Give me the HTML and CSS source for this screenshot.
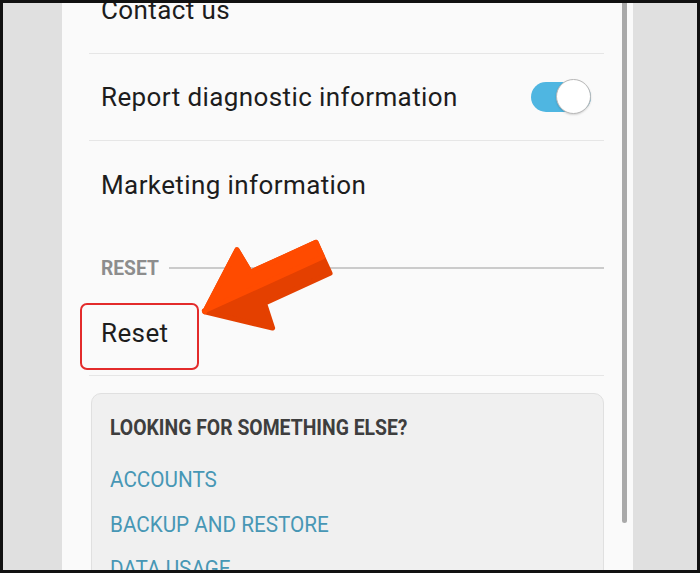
FILE: index.html
```html
<!DOCTYPE html>
<html lang="en">
<head>
  <meta charset="UTF-8">
  <meta name="viewport" content="width=device-width, initial-scale=1.0">
  <title>Settings – Reset</title>
  <link rel="stylesheet" href="styles.css">
</head>
<body>
  <div class="frame">
    <div class="screen">
      <div class="content">
        <div class="row"><span class="label">Contact us</span></div>
        <div class="row">
          <span class="label">Report diagnostic information</span>
          <span class="switch"><span class="knob"></span></span>
        </div>
        <div class="row plain"><span class="label">Marketing information</span></div>

        <div class="section-head">
          <span class="section-title">RESET</span>
          <span class="section-line"></span>
        </div>
        <div class="row reset-row">
          <span class="label">Reset</span>
          <span class="highlight"></span>
        </div>

        <div class="suggest">
          <div class="suggest-title"><span>LOOKING FOR SOMETHING ELSE?</span></div>
          <a class="suggest-link" href="#"><span>ACCOUNTS</span></a>
          <a class="suggest-link" href="#"><span>BACKUP AND RESTORE</span></a>
          <a class="suggest-link" href="#"><span>DATA USAGE</span></a>
        </div>
      </div>
      <div class="scrollbar"></div>
    </div>

    <!-- pointer arrow drawn over the screen -->
    <svg class="arrow" width="160" height="110" viewBox="190 230 160 110">
      <g transform="translate(202 313) rotate(-24.5)">
        <polygon points="3,0 58,-43 61,-17 133,-17 133,17 61,17 58,43" fill="#e44000" stroke="#e44000" stroke-width="5" stroke-linejoin="round"/>
        <polygon points="3,0 58,-43 61,-17 133,-17 133,-1 3,-1" fill="#ff4b00" stroke="#ff4b00" stroke-width="5" stroke-linejoin="round"/>
      </g>
    </svg>
  </div>
</body>
</html>
```

FILE: styles.css
```css
* { box-sizing: border-box; }

html, body {
  margin: 0;
  background: #111;
}

.frame {
  position: relative;
  width: 700px;
  height: 573px;
  border: 3px solid #111;
  background: #e0e0e0;
  overflow: hidden;
  font-family: Roboto, "Noto Sans", sans-serif;
}

.screen {
  display: flex;
  width: 571px;
  height: 100%;
  margin-left: 59px;
  background: #fafafa;
}

.content {
  width: 542px;
  margin-top: -36px;
  padding-left: 27px;
}

.row {
  position: relative;
  display: flex;
  align-items: center;
  justify-content: space-between;
  height: 87px;
  border-bottom: 1px solid #e6e6e6;
}
.row.plain { border-bottom: none; }
.row.reset-row { height: 86px; }

.label {
  padding-left: 12px;
  font-size: 26px;
  letter-spacing: 0.4px;
  color: #1d1d1d;
}

.switch {
  position: relative;
  width: 60px;
  height: 30px;
  margin-right: 13px;
  border-radius: 15px;
  background: #4fb6e1;
}
.knob {
  position: absolute;
  right: 0;
  top: -3px;
  width: 35px;
  height: 35px;
  border-radius: 50%;
  background: #fff;
  border: 1px solid #b8b8b8;
  box-shadow: 0 1px 2px rgba(0,0,0,0.15);
}

.section-head {
  display: flex;
  align-items: center;
  gap: 10px;
  height: 62px;
  padding-top: 18px;
  padding-left: 12px;
}
.section-title {
  display: inline-block;
  font-size: 21px;
  font-weight: bold;
  color: #8d8d8d;
  transform: scaleX(0.915);
  transform-origin: left center;
  margin-right: -5px;
}
.section-line {
  flex: 1;
  height: 2px;
  background: #cbcbcb;
}

.highlight {
  position: absolute;
  left: -9px;
  top: 13px;
  width: 119px;
  height: 67px;
  border: 2px solid #e32b2b;
  border-radius: 7px;
}

.suggest {
  margin: 17px 0 0 2px;
  padding: 21px 18px 0;
  height: 200px;
  background: #f0f0f0;
  border: 1px solid #e0e0e0;
  border-radius: 10px;
}
.suggest-title span,
.suggest-link span {
  display: inline-block;
  transform-origin: left center;
  white-space: nowrap;
}
.suggest-title span { transform: scaleX(0.88); }
.suggest-link span { transform: scaleX(0.94); }
.suggest-title {
  font-size: 22px;
  line-height: 26px;
  font-weight: bold;
  color: #3e3e3e;
  margin-bottom: 17px;
}
.suggest-link {
  display: block;
  font-size: 22px;
  line-height: 44.5px;
  color: #4797b5;
  text-decoration: none;
}

.scrollbar {
  width: 5px;
  height: 520px;
  margin-left: 18px;
  background: #a9a9a9;
  border-radius: 0 0 3px 3px;
}

.arrow {
  position: absolute;
  left: 187px;
  top: 227px;
}
```
